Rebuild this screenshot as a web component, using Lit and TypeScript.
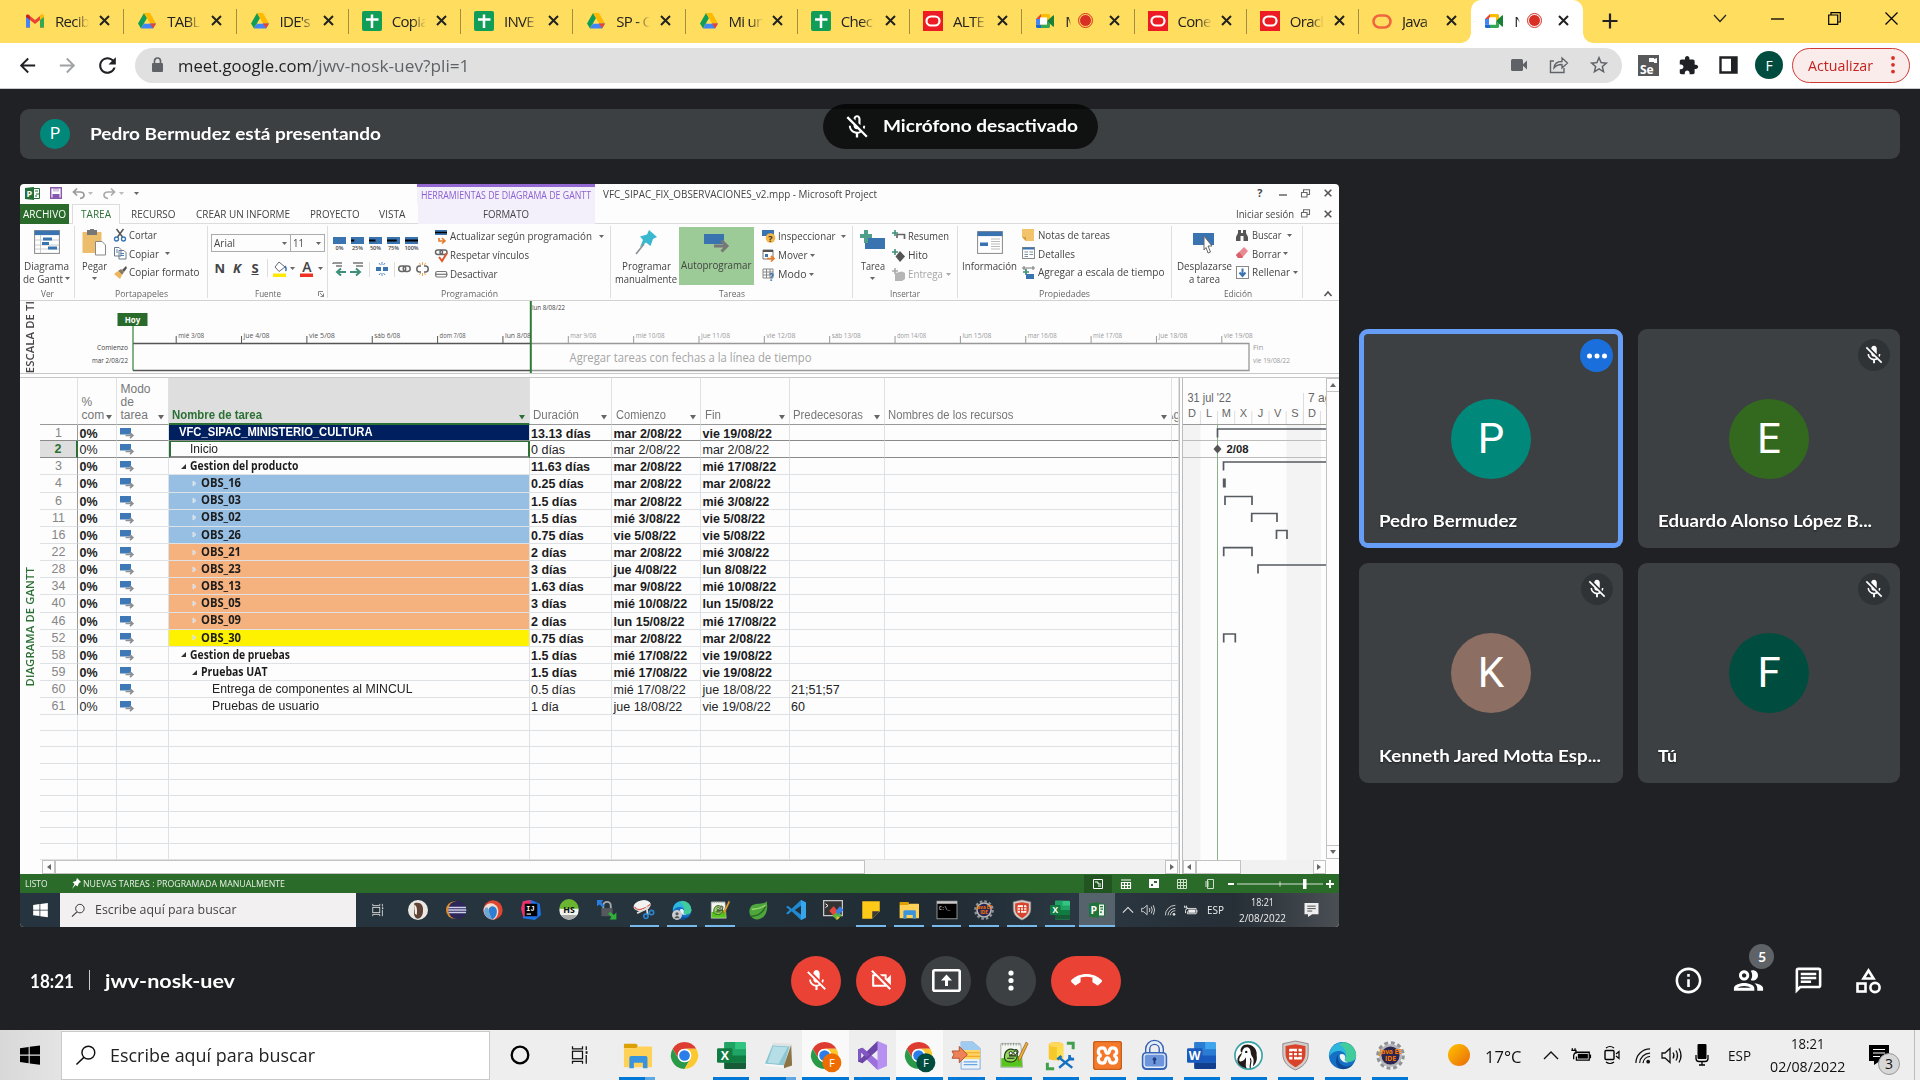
import { LitElement, html, css, svg, nothing } from "lit";
import { customElement, property } from "lit/decorators.js";

/* ---------- shared helpers ---------- */

/** Single-line text squeezed or stretched to a given width. */
@customElement("fit-text")
class FitText extends LitElement {
  @property({ type: Number }) w = 0;
  static styles = css`
    :host { display: inline-block; white-space: nowrap; flex: none; text-align: left; }
    .inner { display: inline-block; transform-origin: 0 50%; white-space: pre; }
  `;
  updated() {
    const el = this.renderRoot.querySelector(".inner") as HTMLElement;
    this.style.width = this.w + "px";
    el.style.transform = "none";
    const natural = el.getBoundingClientRect().width;
    if (natural > 0) el.style.transform = `scaleX(${this.w / natural})`;
  }
  render() { return html`<span class="inner"><slot @slotchange=${() => this.requestUpdate()}></slot></span>`; }
}

const fit = (text: string, w: number, cls = "") => html`<fit-text class=${cls} .w=${w}>${text}</fit-text>`;
const icon = (w: number, h: number, vb: string, body: unknown) =>
  html`<svg width=${w} height=${h} viewBox=${vb} fill="none" style="display:block;flex:none;overflow:visible">${body}</svg>`;
const mat = (size: number, d: string, fill = "#fff") =>
  icon(size, size, "0 0 24 24", svg`<path fill=${fill} d=${d}/>`);

const P = {
  micOff: "M19 11h-1.7c0 .74-.16 1.43-.43 2.05l1.23 1.23c.56-.98.9-2.09.9-3.28zm-4.02.17c0-.06.02-.11.02-.17V5c0-1.66-1.34-3-3-3S9 3.34 9 5v.18l5.98 5.99zM4.27 3L3 4.27l6.01 6.01V11c0 1.66 1.33 3 2.99 3 .22 0 .44-.03.65-.08l1.66 1.66c-.71.33-1.5.52-2.31.52-2.76 0-5.3-2.1-5.3-5.1H5c0 3.41 2.72 6.23 6 6.72V21h2v-3.28c.91-.13 1.77-.45 2.54-.9L19.73 21 21 19.73 4.27 3z",
  micOffLine: "M10.8 4.9c0-.66.54-1.2 1.2-1.2s1.2.54 1.2 1.2l-.01 3.91L15 10.6V5c0-1.66-1.34-3-3-3-1.54 0-2.79 1.16-2.96 2.65l1.76 1.76V4.9zM19 11h-1.7c0 .58-.1 1.13-.27 1.64l1.27 1.27c.44-.88.7-1.87.7-2.91zM4.41 2.86L3 4.27l6 6V11c0 1.66 1.34 3 3 3 .23 0 .44-.03.65-.08l1.66 1.66c-.71.33-1.5.52-2.31.52-2.76 0-5.3-2.1-5.3-5.1H5c0 3.41 2.72 6.23 6 6.72V21h2v-3.28c.91-.13 1.77-.45 2.55-.9l4.2 4.2 1.41-1.41L4.41 2.86z",
  camOff: "M9.56 8l-2-2-4.15-4.14L2 3.27 4.73 6H4c-.55 0-1 .45-1 1v10c0 .55.45 1 1 1h12c.21 0 .39-.08.55-.18L19.73 21l1.41-1.41-8.86-8.86L9.56 8zM5 16V8h1.73l8 8H5zm10-8v2.61l6 6V6.5l-4 4V7c0-.55-.45-1-1-1h-5.61l2 2H15z",
  callEnd: "M12 9c-1.6 0-3.15.25-4.6.72v3.1c0 .39-.23.74-.56.9-.98.49-1.87 1.12-2.66 1.85-.18.18-.43.28-.7.28-.28 0-.53-.11-.71-.29L.29 13.08c-.18-.17-.29-.42-.29-.7 0-.28.11-.53.29-.71C3.34 8.78 7.46 7 12 7s8.66 1.78 11.71 4.67c.18.18.29.43.29.71 0 .28-.11.53-.29.71l-2.48 2.48c-.18.18-.43.29-.71.29-.27 0-.52-.11-.7-.28-.79-.74-1.69-1.36-2.67-1.85-.33-.16-.56-.5-.56-.9v-3.1C15.15 9.25 13.6 9 12 9z",
  people: "M9 13.75c-2.34 0-7 1.17-7 3.5V19h14v-1.75c0-2.33-4.66-3.5-7-3.5zM4.34 17c.84-.58 2.87-1.25 4.66-1.25s3.82.67 4.66 1.25H4.34zM9 12c1.93 0 3.5-1.57 3.5-3.5S10.93 5 9 5 5.5 6.57 5.5 8.5 7.07 12 9 12zm0-5c.83 0 1.5.67 1.5 1.5S9.83 10 9 10s-1.5-.67-1.5-1.5S8.17 7 9 7zm7.04 6.81c1.16.84 1.96 1.96 1.96 3.44V19h4v-1.75c0-2.02-3.5-3.17-5.96-3.44zM15 12c1.93 0 3.5-1.57 3.5-3.5S16.93 5 15 5c-.54 0-1.04.13-1.5.35.63.89 1 1.98 1 3.15s-.37 2.26-1 3.15c.46.22.96.35 1.5.35z",
  chat: "M4 4h16v12H5.17L4 17.17V4m0-2c-1.1 0-1.99.9-1.99 2L2 22l4-4h14c1.1 0 2-.9 2-2V4c0-1.1-.9-2-2-2H4zm2 10h8v2H6v-2zm0-3h12v2H6V9zm0-3h12v2H6V6z",
  info: "M11 7h2v2h-2zm0 4h2v6h-2zm1-9C6.48 2 2 6.48 2 12s4.48 10 10 10 10-4.48 10-10S17.52 2 12 2zm0 18c-4.41 0-8-3.59-8-8s3.59-8 8-8 8 3.59 8 8-3.59 8-8 8z",
  puzzle: "M20.5 11H19V7c0-1.1-.9-2-2-2h-4V3.5C13 2.12 11.88 1 10.5 1S8 2.12 8 3.5V5H4c-1.1 0-1.99.9-1.99 2v3.8H3.5c1.49 0 2.7 1.21 2.7 2.7s-1.21 2.7-2.7 2.7H2V20c0 1.1.9 2 2 2h3.8v-1.5c0-1.49 1.21-2.7 2.7-2.7 1.49 0 2.7 1.21 2.7 2.7V22H17c1.1 0 2-.9 2-2v-4h1.5c1.38 0 2.5-1.12 2.5-2.5S21.88 11 20.5 11z",
  star: "M22 9.24l-7.19-.62L12 2 9.19 8.63 2 9.24l5.46 4.73L5.82 21 12 17.27 18.18 21l-1.63-7.03L22 9.24zM12 15.4l-3.76 2.27 1-4.28-3.32-2.88 4.38-.38L12 6.1l1.71 4.04 4.38.38-3.32 2.88 1 4.28L12 15.4z",
  back: "M20 11H7.83l5.59-5.59L12 4l-8 8 8 8 1.41-1.41L7.83 13H20v-2z",
  fwd: "M4 11h12.17l-5.59-5.59L12 4l8 8-8 8-1.41-1.41L16.17 13H4v-2z",
  reload: "M17.65 6.35C16.2 4.9 14.21 4 12 4c-4.42 0-7.99 3.58-7.99 8s3.57 8 7.99 8c3.73 0 6.84-2.55 7.73-6h-2.08c-.82 2.33-3.04 4-5.65 4-3.31 0-6-2.69-6-6s2.69-6 6-6c1.66 0 3.14.69 4.22 1.78L13 11h7V4l-2.35 2.35z",
};

/* ---------- coloured application icons ---------- */

const chrome = svg`<circle cx="16" cy="16" r="15" fill="#fff"/>
  <path d="M3 8.500A15 15 0 0 1 29 8.500H16A7.500 7.500 0 0 0 9.500 19.700Z" fill="#dd3c31"/>
  <path d="M3 8.500A15 15 0 0 0 16 31L22.500 19.700A7.500 7.500 0 0 1 9.500 19.700Z" fill="#2a9a48"/>
  <path d="M29 8.500A15 15 0 0 1 16 31L22.500 19.700A7.500 7.500 0 0 0 16 8.500Z" fill="#fbc92f"/>
  <circle cx="16" cy="16" r="7.300" fill="#fff"/><circle cx="16" cy="16" r="5.900" fill="#2b7de9"/>`;
const chromeWith = (c: string) => svg`<g transform="translate(-1 0)">${chrome}<circle cx="24" cy="24" r="10.500" fill=${c}/>
  <text x="24" y="28.500" font-size="12.500" fill="#fff" text-anchor="middle" font-family="Open Sans, sans-serif">F</text></g>`;
const office = (letter: string, c1: string, c2: string, c3: string, c4: string) => svg`
  <rect x="8" y="1" width="24" height="30" rx="1.500" fill=${c1}/><path d="M9.500 1H20V9H8V2.500Q8 1 9.500 1Z" fill=${c2}/><rect x="8" y="9" width="24" height="7.500" fill=${c2}/>
  <rect x="8" y="16" width="24" height="8" fill=${c3}/><path d="M8 24H32V29.500A1.500 1.500 0 0 1 30.500 31H9.500A1.500 1.500 0 0 1 8 29.500Z" fill=${c4}/>
  <rect x="0" y="8" width="17" height="16" rx="1.500" fill=${c3}/>
  <text x="8.500" y="21" font-size="13.500" font-weight="700" fill="#fff" text-anchor="middle" font-family="Open Sans, sans-serif">${letter}</text>`;
const excel = svg`${office("X", "#33c481", "#21a366", "#107c41", "#185c37")}`;
const word = svg`${office("W", "#41a5ee", "#2b7cd3", "#185abd", "#123f8d")}`;
const folder = svg`<path d="M1 4Q1 3 2 3H14Q16 3 16 5V8H1Z" fill="#dca005"/><path d="M1 8H14L17 6H31Q32 6 32 7V29H1Z" fill="#ffd257"/>
  <path d="M7 30V18.500A2 2 0 0 1 9 16.500H25A2 2 0 0 1 27 18.500V30H22V24H12V30Z" fill="#3a94dd"/>`;
const edge = svg`<circle cx="16" cy="16" r="15" fill="#1470c4"/>
  <path d="M1.500 13A15 15 0 0 1 31 16C31 21 27 23 23 23C19.500 23 17.500 21.500 19 19.500C20.500 17 19 11 12.500 11C7 11 2.500 14 1.500 18Z" fill="#2db7dc"/>
  <path d="M17 1A15 15 0 0 1 31 16C31 21 27 23 23 23C19.500 23 17.500 21.500 19 19.500C21 16 21 8 13 4Z" fill="#4bd386" opacity=".75"/>
  <path d="M12 14C9 19 12 27 20 28C24 28.500 27 26 29 24A15 15 0 0 1 15 31C8 29 7 19 12 14Z" fill="#0d4b98"/>
  <path d="M13 15C17 13 20 16 18.800 19.500C17.500 21.500 19.500 23.300 23 23.200C19 25 12 22 13 15Z" fill="#eef6fb"/>`;
const notepad = svg`<path d="M10 3L29 4L22 27L1 25Z" fill="#8cc7d3"/><path d="M10 2L30 3L29 6L9 5Z" fill="#dfe3e4"/>
  <path d="M30 4L31 27L22 30L22 27Z" fill="#8c7444"/><path d="M1 25L22 27L22 29.500L1 27Z" fill="#f6f8f8"/><path d="M10 6L26 7L16 25L4 24Z" fill="#c3e6ec" opacity=".75"/>`;
const notepadpp = svg`<path d="M2 3H24L26 29H2Z" fill="#f3f6f0" stroke="#a5aaa5"/><path d="M2.500 19L25 16L25.500 28.500H2.500Z" fill="#58c41e"/>
  <path d="M6 18C6 11 11 7 17 10C20 8 22 12 20 14C21 20 17 24 12 23C8 23 6 21 6 18Z" fill="#93d95a" stroke="#263b1f" stroke-width="1.300"/>
  <circle cx="13" cy="13.500" r="1.800" fill="#fff" stroke="#222"/><circle cx="18" cy="13" r="1.800" fill="#fff" stroke="#222"/><path d="M9 19H17M11 16.500H19" stroke="#222" stroke-width="1.300"/>
  <path d="M30 1L32 3L24 20L21.500 22L21.500 18.500Z" fill="#f0ac35" stroke="#80501b" stroke-width=".700"/><path d="M4 2V5M7 2V5M10 2V5M13 2V5M16 2V5M19 2V5M22 2V5" stroke="#8f9693"/>`;
const vstudio = svg`<path d="M0 9.500L5 7.500V24.500L0 22.500Z" fill="#5b3a93"/><path d="M5 7.500L24 23.500L21.500 32L0 11Z" fill="#9b70dc"/>
  <path d="M5 24.500L24 8L21.500 0L0 21Z" fill="#6c45a8"/><path d="M5 7.500L13 14.500L9 18L3.500 13V19L0 22.500V9.500Z" fill="#8257c4"/><path d="M3.500 13L6.500 16L3.500 19Z" fill="#eee"/>
  <path d="M21.500 0L32 4.500V27.500L21.500 32Z" fill="#b791f2"/>`;
const winscp = svg`<path d="M10 1H23L31 8V31H10Z" fill="#eaf2fb" stroke="#7fa6d4"/><path d="M10 1H23L31 8V10H10Z" fill="#9fcbf1"/><path d="M7 10H31V20H7Z" fill="#ffd463"/>
  <path d="M10 13H31M10 17H31" stroke="#f0a92a" stroke-width="1.200"/><path d="M13 23H28M13 26H28" stroke="#6aa5dd" stroke-width="1.400"/><path d="M0 11H8V6L17 15L8 24V19H0L2 15Z" fill="#ee8157" stroke="#a9512c"/>`;
const dbTool = svg`<path d="M3 4C3 0 19 0 19 4V19C19 22 3 22 3 19Z" fill="#f7c829"/><path d="M12 2C17 2 19 3 19 4V19C19 21 15 21.500 12 21.500Z" fill="#ffdf4d"/><ellipse cx="11" cy="4" rx="8" ry="2.500" fill="#ffd75e"/>
  <path d="M23 2.500H30V9" stroke="#41a04c" stroke-width="3.300"/><path d="M1.500 24V30.500H9" stroke="#41a04c" stroke-width="3.300"/>
  <path d="M14 18L29 29.500M28 18L14.500 29.500" stroke="#1471c0" stroke-width="2.600"/><path d="M12.500 20.500L17 16.500M26 15.500V20H31" stroke="#1471c0" stroke-width="3"/>`;
const xampp = svg`<rect x="0" y="0" width="32" height="32" rx="3" fill="#f4792b"/><rect x=".700" y=".700" width="30.600" height="30.600" rx="2.500" stroke="#c55f1c" stroke-width="1.400"/>
  <path d="M10.500 7.500C15.500 7.500 12.500 13.500 16 13.500C19.500 13.500 16.500 7.500 21.500 7.500C27.500 7.500 27.500 15.500 22.500 16C27.500 16.500 27.500 24.500 21.500 24.500C16.500 24.500 19.500 18.500 16 18.500C12.500 18.500 15.500 24.500 10.500 24.500C4.500 24.500 4.500 16.500 9.500 16C4.500 15.500 4.500 7.500 10.500 7.500Z" fill="none" stroke="#fff" stroke-width="3.600"/>`;
const lockApp = svg`<path d="M8.500 14V9A7.500 7.500 0 0 1 23.500 9V14" stroke="#3560b0" stroke-width="6"/><path d="M8.500 14V9A7.500 7.500 0 0 1 23.500 9V14" stroke="#e6eefa" stroke-width="3"/>
  <rect x="2" y="12" width="28" height="20" rx="5" fill="#3765b8"/><rect x="4.500" y="14.500" width="23" height="14.500" rx="3" fill="#6c95dc" stroke="#e3ecf9" stroke-width="1.500"/>
  <circle cx="16" cy="20" r="2" fill="#20407f"/><path d="M16 20V25.500" stroke="#20407f" stroke-width="2"/>`;
const dbeaver = svg`<circle cx="16" cy="16" r="15" fill="#fff" stroke="#37a3a4" stroke-width="1.800"/><path d="M11 4.500C18 2 26 7 25 16C26 21 24 25 21 28C21 24 23 21 20 17C17 13 20 9 15 7C11 6 9 10 9 13C6 12 7 7 11 4.500Z" fill="#241c1a"/>
  <path d="M9 13C8 17 5 19 6 22C8 24 12 21 13 18C14 23 12 27 14 30C10 30 5 27 4 23C3 18 6 15 9 13Z" fill="#241c1a"/><circle cx="13.500" cy="12" r="1.300" fill="#111"/><path d="M18 19C20 23 17 26 18 30" stroke="#241c1a" stroke-width="1.300"/>`;
const forti = svg`<path d="M2 3L16 0L30 3V14C30 24 23 29 16 32C9 29 2 24 2 14Z" fill="#d2cdca" stroke="#8b8683"/><path d="M5 5.500L16 3.500L27 5.500V14C27 22 21 26 16 29C11 26 5 22 5 14Z" fill="#d8432a"/>
  <rect x="9" y="8.500" width="14" height="12" rx="1" fill="#fff"/><path d="M9 12.500H23M9 16.500H23M13.500 11V21M18.500 8V18" stroke="#d83b22" stroke-width="1.700"/>`;
const javaEE = svg`<circle cx="16" cy="16" r="14" stroke="#8f9296" stroke-width="3.500" stroke-dasharray="4.200 3.130"/><circle cx="16" cy="16" r="12.500" fill="#b4b6b8"/><circle cx="16" cy="16" r="10" fill="#2c2452"/>
  <text x="16" y="14.500" font-size="7.500" font-weight="700" fill="#f57c00" text-anchor="middle" font-family="Open Sans, sans-serif" textLength="25">Java EE</text>
  <text x="16" y="22.500" font-size="7.500" font-weight="700" fill="#f57c00" text-anchor="middle" font-family="Open Sans, sans-serif">IDE</text>`;
const taskView = (c: string) => svg`<path d="M4 2V6H20V2M4 30V26H20V30" stroke=${c} stroke-width="2"/><rect x="4" y="10" width="16" height="12" stroke=${c} stroke-width="2"/><path d="M26 2V8M26 16V30" stroke=${c} stroke-width="2"/><rect x="25" y="10" width="3" height="4" fill=${c}/>`;
const winLogo = (c: string) => svg`<path fill=${c} d="M0 3L9.500 1.600V10H0ZM10.700 1.400L22 0V10H10.700ZM0 11.200H9.500V19.600L0 18.200ZM10.700 11.200H22V21.200L10.700 19.800Z"/>`;
const searchGlyph = (c: string) => svg`<circle cx="14" cy="8" r="6.700" stroke=${c} stroke-width="1.500"/><path d="M9.300 13L1.500 20.500" stroke=${c} stroke-width="1.600"/>`;
const chevUp = (c: string) => svg`<path d="M1 9L8 2L15 9" stroke=${c} stroke-width="1.400"/>`;
const wifi = (c: string) => svg`<g stroke=${c} stroke-width="1.300"><path d="M2 17A15 15 0 0 1 17 2"/><path d="M6 17A11 11 0 0 1 17 6.500"/><path d="M9.500 17A8 8 0 0 1 17 10"/></g><circle cx="15" cy="15.500" r="2" fill=${c}/>`;
const speaker = (c: string) => svg`<path d="M1 7H4L9 2.500V16.500L4 12H1Z" stroke=${c} stroke-width="1.300"/><path d="M12 6.500Q14 9.500 12 12.500M15 4.500Q18 9.500 15 14.500M18 2.500Q22 9.500 18 16.500" stroke=${c} stroke-width="1.300"/>`;
const battery = (c: string) => svg`<path d="M6 5.500H21V14H7V10" stroke=${c} stroke-width="1.400"/><rect x="8.500" y="7.200" width="11" height="5.200" fill=${c}/><rect x="21.500" y="8" width="1.500" height="4" fill=${c}/><path d="M1.500 3.500H6.500V6.500H5L4 9V13M2.500 3.500V1M5.500 3.500V1" stroke=${c} stroke-width="1.400"/>`;
const note = (c: string, l: string) => svg`<path d="M0 0H20V16H11L5 20V16H0Z" fill=${c}/><path d="M4 4.500H16M4 8H16M4 11.500H11" stroke=${l} stroke-width="1.200"/>`;

/* ---------- browser chrome ---------- */

const FAV: Record<string, unknown> = {
  gmail: svg`<path d="M1 5V16.500H5V9L10 13L15 9V16.500H19V5L17 3.500L10 9L3 3.500Z" fill="#ea4335"/><path d="M1 5V16.500H5V8Z" fill="#4285f4"/><path d="M19 5V16.500H15V8Z" fill="#34a853"/><path d="M1 5Q1.500 3 3.500 3.800L5 5V9L1 6Z" fill="#c5221f"/><path d="M19 5Q18.500 3 16.500 3.800L15 5V9L19 6Z" fill="#fbbc04"/>`,
  drive: svg`<path d="M7 2L1 12.500L4 17.500L10 7Z" fill="#0f9d58"/><path d="M7 2H13L19 12.500H13Z" fill="#ffba00"/><path d="M7 12.500H19L16 17.500H4Z" fill="#4285f4"/><path d="M13 12.500H19L16 17.500Z" fill="#ea4335"/><path d="M10 8L7.300 12.500H12.700Z" fill="#ffdd5e"/>`,
  sheet: svg`<rect width="20" height="20" rx="2" fill="#0f9d58"/><path d="M10 3.500V17M4 8.500H16.500" stroke="#fff" stroke-width="2.500"/>`,
  oracle: svg`<rect width="20" height="20" fill="#ed1c24"/><rect x="3.500" y="5.500" width="13" height="9" rx="4.500" stroke="#fff" stroke-width="2.200"/>`,
  java: svg`<rect x="1.500" y="4.500" width="17" height="12" rx="6" stroke="#f0653f" stroke-width="2.500"/>`,
  meet: svg`<path d="M1 8L6 3V8Z" fill="#ea4335"/><path d="M6 3H13.500Q15 3 15 4.500V8L12 10V6.500H6Z" fill="#fbbc04"/><path d="M1 8H5V13.500H1Z" fill="#4285f4"/><path d="M1 13.500H6V17H2.500Q1 17 1 15.500Z" fill="#1967d2"/><path d="M6 13.500H12V10L15 12.500V15.500Q15 17 13.500 17H6Z" fill="#34a853"/><path d="M5 6.500H12V13.500H5Z" fill="#fff"/><path d="M12 10L18 4.500Q19 4 19 5V15Q19 16 18 15.500Z" fill="#188038"/>`,
};
const TABS: [string, string, boolean?][] = [
  ["gmail", "Recib"], ["drive", "TABL"], ["drive", "IDE's"], ["sheet", "Copia"], ["sheet", "INVE"], ["drive", "SP - C"], ["drive", "Mi un"],
  ["sheet", "Chec"], ["oracle", "ALTE"], ["meet", "M", true], ["oracle", "Cone"], ["oracle", "Oracl"], ["java", "Java"], ["meet", "N", true],
];

@customElement("browser-chrome")
class BrowserChrome extends LitElement {
  static styles = css`
    :host { display: block; height: 89px; font-family: "Open Sans", "Noto Sans", sans-serif; color: #222; box-sizing: border-box; border-bottom: 1px solid #c9cacb; background: #fff; }
    .strip { height: 43px; background: #ffdd5e; display: flex; padding-left: 11.500px; }
    .tab { width: 112.250px; height: 43px; box-sizing: border-box; display: flex; align-items: center; padding: 0 0 2px 13.500px; position: relative; flex: none; }
    .tab:not(.on):not(.last)::after { content: ""; position: absolute; right: -0.500px; top: 9px; width: 1px; height: 25px; background: #a28d45; }
    .on { background: #fff; border-radius: 10px 10px 0 0; }
    .on::before, .on::after { content: ""; position: absolute; bottom: 0; width: 10px; height: 10px; }
    .on::before { left: -10px; background: radial-gradient(circle at 0 0, transparent 9.500px, #fff 10px); }
    .on::after { right: -10px; background: radial-gradient(circle at 100% 0, transparent 9.500px, #fff 10px); }
    .tt { margin-left: 10px; width: 34px; overflow: hidden; font-size: 15px; line-height: 20px; white-space: nowrap; letter-spacing: -0.700px; -webkit-mask-image: linear-gradient(90deg, #000 60%, transparent 100%); }
    .tt.short { width: 6px; }
    .rec { width: 11px; height: 11px; border-radius: 50%; background: #d93025; border: 1.500px solid #ffdd5e; outline: 1.300px solid #d93025; margin: 0 6px 0 8px; }
    .on .rec { border-color: #fff; }
    .x { margin-left: auto; margin-right: 14px; }
    .plus { margin: 13px 0 0 19px; }
    .win { margin-left: auto; display: flex; height: 37px; align-items: center; }
    .win div { width: 57.200px; display: flex; justify-content: center; }
    .bar { height: 45px; display: flex; align-items: center; padding-bottom: 1px; box-sizing: border-box; }
    .nav { width: 40px; display: flex; justify-content: center; }
    .omni { width: 1487px; height: 35px; border-radius: 18px; background: #e0e0e0; display: flex; align-items: center; font-size: 16.500px; box-sizing: border-box; padding: 0 3px 0 16px; }
    .omni .path { color: #5f6368; }
    .lock { margin-right: 13.500px; }
    .omni .end { margin-left: auto; display: flex; align-items: center; }
    .omni .end div { width: 40px; display: flex; justify-content: center; }
    .ext { width: 40.300px; display: flex; justify-content: center; }
    .av { width: 28px; height: 28px; border-radius: 50%; background: #004d40; color: #fff; font-size: 14px; display: flex; align-items: center; justify-content: center; }
    .upd { width: 118.500px; height: 35px; border-radius: 18px; border: 1.500px solid #cf3a32; background: #faeceb; color: #c5221f; box-sizing: border-box; display: flex; align-items: center; padding: 0 14px 0 15px; font-size: 14px; margin-left: 2.500px; justify-content: space-between; }
  `;
  render() {
    return html`
      <div class="strip">
        ${TABS.map(([f, t, rec], i) => html`<div class="tab ${i === 13 ? "on" : i === 12 ? "last" : ""}">
          ${icon(20, 20, "0 0 20 20", FAV[f])}<div class="tt ${rec ? "short" : ""}">${t}</div>${rec ? html`<div class="rec"></div>` : nothing}
          <div class="x">${icon(11, 11, "0 0 11 11", svg`<path d="M1 1L10 10M10 1L1 10" stroke="#222" stroke-width="2"/>`)}</div></div>`)}
        <div class="plus">${icon(16, 16, "0 0 16 16", svg`<path d="M8 0.500V15.500M0.500 8H15.500" stroke="#222" stroke-width="2.200"/>`)}</div>
        <div class="win">
          <div>${icon(14, 9, "0 0 14 9", svg`<path d="M1 1L7 7.500L13 1" stroke="#222" stroke-width="1.200"/>`)}</div>
          <div>${icon(13, 2, "0 0 13 2", svg`<path d="M0 1H13" stroke="#000" stroke-width="1.300"/>`)}</div>
          <div>${icon(13, 13, "0 0 13 13", svg`<path d="M0.700 3H9.700V12.300H0.700ZM3 3V0.700H12.300V10H9.700" stroke="#000" stroke-width="1.200"/>`)}</div>
          <div>${icon(13, 13, "0 0 13 13", svg`<path d="M0.500 0.500L12.500 12.500M12.500 0.500L0.500 12.500" stroke="#000" stroke-width="1.200"/>`)}</div>
        </div>
      </div>
      <div class="bar">
        <div class="nav" style="margin-left:7px">${mat(23, P.back, "#202124")}</div><div class="nav">${mat(23, P.fwd, "#a0a2a5")}</div><div class="nav">${mat(25, P.reload, "#202124")}</div>
        <div class="omni" style="margin-left:8px">
          <div class="lock">${icon(13, 16, "0 0 13 16", svg`<rect x="1" y="6" width="11" height="9" rx="1" fill="#5f6368"/><path d="M3.500 6V4A3 3 0 0 1 9.500 4V6" stroke="#5f6368" stroke-width="1.700"/>`)}</div>
          ${fit("meet.google.com", 134)}<span class="path">${fit("/jwv-nosk-uev?pli=1", 157.5)}</span>
          <div class="end"><div>${icon(16, 12, "0 0 16 12", svg`<rect width="12" height="12" rx="1.500" fill="#5f6368"/><path d="M11 6L16 1.500V10.500Z" fill="#5f6368"/>`)}</div>
            <div>${icon(20, 18, "0 0 20 18", svg`<path d="M5 5H1.500V16.500H15V12" stroke="#5f6368" stroke-width="1.400"/><path d="M5 12Q5.500 5.500 13 5.500V2L18.500 7L13 12V8.500Q8 8.300 5 12Z" stroke="#5f6368" stroke-width="1.300"/>`)}</div>
            <div>${mat(22, P.star, "#5f6368")}</div></div>
        </div>
        <div class="ext" style="margin-left:6px">${icon(21, 21, "0 0 21 21", svg`<rect width="21" height="21" fill="#58595b"/><path d="M11 3H16V4L19 3V8H16V7H11Z" fill="#fff"/><text x="2" y="18.500" font-size="12" font-weight="700" fill="#fff" font-family="Open Sans, sans-serif">Se</text>`)}</div>
        <div class="ext">${mat(21, P.puzzle, "#202124")}</div>
        <div class="ext">${icon(19, 18, "0 0 19 18", svg`<path d="M1.500 1.500H17.500V16.500H1.500Z" stroke="#202124" stroke-width="2.400"/><path d="M12 1H18V17H12Z" fill="#202124"/>`)}</div>
        <div class="ext"><div class="av">F</div></div>
        <div class="upd">${fit("Actualizar", 65)}${icon(4, 18, "0 0 4 18", svg`<circle cx="2" cy="2" r="1.900" fill="#d93025"/><circle cx="2" cy="8.800" r="1.900" fill="#d93025"/><circle cx="2" cy="15.600" r="1.900" fill="#d93025"/>`)}</div>
      </div>`;
  }
}

/* ---------- shared Project window ---------- */

const BLUE = "#3a74b0";
const bar = (x = 0, y = 0, w = 12, h = 7) => svg`<rect x=${x} y=${y} width=${w} height=${h} fill=${BLUE}/>`;
const caretSvg = (c = "#666") => icon(5, 3, "0 0 5 3", svg`<path d="M0 0H5L2.500 3Z" fill=${c}/>`);
const I: Record<string, unknown> = {
  cut: svg`<path d="M2.500 0L8.500 8M9.500 0L3.500 8" stroke="#555" stroke-width="1.500"/><circle cx="2.500" cy="10" r="2" stroke="#3a74b0" stroke-width="1.300"/><circle cx="9.500" cy="10" r="2" stroke="#3a74b0" stroke-width="1.300"/>`,
  copy: svg`<path d="M0.500 0.500H5L7 2.500V9H0.500ZM5 3.500H10L12 5.500V12H5Z" fill="#fff" stroke="#6b7a8a"/><path d="M6.500 6.500H10M6.500 8.500H10M2 3H4M2 5H4" stroke="#4a82bd"/>`,
  brush: svg`<path d="M12 0L8 4L10 6L13 2Z" fill="#555"/><path d="M7 3L10 6L8 9L4 5Z" fill="#8b7a63"/><path d="M4 5L8 9L6 13L0 8Z" fill="#f0b45b"/>`,
  upd: svg`${bar(0, 0, 12, 5)}<path d="M0 2.500H12" stroke="#000" stroke-width="1.500"/><path d="M4 8V11H9M7 8L10 11L7 13.500" stroke="#e77b27" stroke-width="1.600"/>`,
  resp: svg`<rect x="0.500" y="1" width="7" height="4.500" rx="2.200" stroke="#666" stroke-width="1.500"/><rect x="5" y="1" width="7" height="4.500" rx="2.200" stroke="#666" stroke-width="1.500"/><path d="M4 8L7 12L12 4" stroke="#e0562a" stroke-width="2"/>`,
  deact: svg`<rect x="0.700" y="3.500" width="11" height="5.500" rx="1.500" stroke="#777" stroke-width="1.200"/><path d="M0 6.300H12.500" stroke="#777" stroke-width="1.200"/>`,
  insp: svg`${bar(0, 0, 12, 6)}<circle cx="8.500" cy="8" r="4.800" fill="#f5b648"/><text x="8.500" y="11.500" font-size="9" font-weight="700" text-anchor="middle" fill="#333" font-family="Open Sans, sans-serif">?</text>`,
  mover: svg`<path d="M1 1H11V10H1Z" stroke="#777" fill="#fff"/><path d="M1 2H11" stroke="#555" stroke-width="2"/><path d="M3 5H6V8H3Z" fill="${BLUE}"/><path d="M5 9.500H11M9 7L12 9.500L9 12.500" stroke="#e77b27" stroke-width="1.700"/>`,
  modo: svg`<path d="M1 1H11V10H1ZM1 4H11M1 7H11M4.500 1V10M8 1V10" stroke="#888"/><text x="9.500" y="13" font-size="10" font-weight="700" text-anchor="middle" fill="${BLUE}" font-family="Open Sans, sans-serif">?</text>`,
  resumen: svg`<path d="M3 0V6M0 3H6" stroke="#3f8f79" stroke-width="1.600"/><path d="M5 4V8M5 4.500H12.500V9" stroke="#666" stroke-width="1.700"/>`,
  hito: svg`<path d="M3 0V6M0 3H6" stroke="#3f8f79" stroke-width="1.600"/><path d="M8 2L13 7.500L8 13L3.500 7.500Z" fill="#555"/>`,
  entrega: svg`<path d="M3 0V6M0 3H6" stroke="#aaa" stroke-width="1.600"/><path d="M3 5L10 3.500L13 5V11L10 13H3Z" fill="#b5b5b5"/>`,
  notas: svg`<path d="M0 0H12V12H4L0 8Z" fill="#f2c36b"/><path d="M0 8H4V12Z" fill="#d79d3a"/>`,
  detalles: svg`<rect x="0.500" y="0.500" width="12" height="11" fill="#fff" stroke="#888"/><path d="M1 1.500H12" stroke="${BLUE}" stroke-width="2"/><path d="M2.500 5H6M7.500 5H11M2.500 7.500H6M7.500 7.500H11M2.500 9.500H6" stroke="#7b8ba0"/>`,
  agregar: svg`<path d="M2 0V4M11 0V4M0 2H13" stroke="#777"/><path d="M4 3V9M1 6H7" stroke="#3f8f79" stroke-width="1.700"/>${bar(4, 8, 8, 5)}`,
  buscar: svg`<path d="M2 1H5V4H7V1H10V4L12 8V12H7.500V7H4.500V12H0V8L2 4Z" fill="#555"/>`,
  borrar: svg`<path d="M8 0L12 4L6 11H2L0 8Z" fill="#e78a91"/><path d="M0 8L3 5L7 10L6 11H2Z" fill="#d9606b"/>`,
  rellenar: svg`<rect x="0.500" y="0.500" width="12" height="12" fill="#fff" stroke="#888"/><path d="M6.500 2.500V9M3.500 6.500L6.500 10L9.500 6.500" stroke="${BLUE}" stroke-width="2"/>`,
};
const small = (key: string, text: string, w: number, caret = -1, cls = "") => html`<div class="srow ${cls}"><span class="sic">${icon(14, 13, "0 0 14 13", I[key])}</span>${fit(text, w)}${caret >= 0 ? html`<span class="cr" style="margin-left:${caret}px">${caretSvg(cls ? "#aaa" : "#666")}</span>` : nothing}</div>`;

type Row = [string, string, number, string, string, string, string, string, string?, number?];
/* id, name, indent, name style, duration, start, end, predecessors, marker, name width */
const ROWS: Row[] = [
  ["1", "VFC_SIPAC_MINISTERIO_CULTURA", 11.5, "navy b", "13.13 días", "mar 2/08/22", "vie 19/08/22", "", "", 193.5],
  ["2", "Inicio", 22.5, "sel", "0 días", "mar 2/08/22", "mar 2/08/22", "", "", 28],
  ["3", "Gestion del producto", 22.5, "b", "11.63 días", "mar 2/08/22", "mié 17/08/22", "", "o", 108.5],
  ["4", "OBS_16", 33.5, "blue b", "0.25 días", "mar 2/08/22", "mar 2/08/22", "", "c", 40],
  ["6", "OBS_03", 33.5, "blue b", "1.5 días", "mar 2/08/22", "mié 3/08/22", "", "c", 40],
  ["11", "OBS_02", 33.5, "blue b", "1.5 días", "mié 3/08/22", "vie 5/08/22", "", "c", 40],
  ["16", "OBS_26", 33.5, "blue b", "0.75 días", "vie 5/08/22", "vie 5/08/22", "", "c", 40],
  ["22", "OBS_21", 33.5, "orange b", "2 días", "mar 2/08/22", "mié 3/08/22", "", "c", 40],
  ["28", "OBS_23", 33.5, "orange b", "3 días", "jue 4/08/22", "lun 8/08/22", "", "c", 40],
  ["34", "OBS_13", 33.5, "orange b", "1.63 días", "mar 9/08/22", "mié 10/08/22", "", "c", 40],
  ["40", "OBS_05", 33.5, "orange b", "3 días", "mié 10/08/22", "lun 15/08/22", "", "c", 40],
  ["46", "OBS_09", 33.5, "orange b", "2 días", "lun 15/08/22", "mié 17/08/22", "", "c", 40],
  ["52", "OBS_30", 33.5, "yellow b", "0.75 días", "mar 2/08/22", "mar 2/08/22", "", "c", 40],
  ["58", "Gestion de pruebas", 22.5, "b", "1.5 días", "mié 17/08/22", "vie 19/08/22", "", "o", 100],
  ["59", "Pruebas UAT", 33.5, "b", "1.5 días", "mié 17/08/22", "vie 19/08/22", "", "o", 66.5],
  ["60", "Entrega de componentes al MINCUL", 44.5, "", "0.5 días", "mié 17/08/22", "jue 18/08/22", "21;51;57", "", 200.5],
  ["61", "Pruebas de usuario", 44.5, "", "1 día", "jue 18/08/22", "vie 19/08/22", "60", "", 107],
];
const BLANKS = Array.from({ length: 9 });

@customElement("project-window")
class ProjectWindow extends LitElement {
  static styles = css`
    :host { display: block; width: 1319px; height: 743px; background: #fdfdfe; overflow: hidden; border-radius: 4px; font: 10.800px/14px "Open Sans", "Noto Sans", sans-serif; color: #444; }
    svg { display: block; flex: none; }
    .title { height: 20px; display: flex; align-items: center; }
    .qa { display: flex; align-items: center; width: 397px; padding: 0 0 2px 5px; box-sizing: border-box; }
    .ctx { width: 177.500px; height: 20px; box-sizing: border-box; border-top: 3px solid #9368d0; background: #f3effb; color: #8b5fd0; padding-left: 4px; line-height: 16px; font-size: 10px; }
    .name { padding-left: 8px; font-size: 11.500px; }
    .ctl { margin-left: auto; display: flex; padding-bottom: 2px; }
    .ctl > * { width: 22.600px; display: flex; justify-content: center; align-items: center; font-weight: 700; }
    .tabs { height: 20px; display: flex; align-items: center; border-bottom: 1px solid #dcdcdc; box-sizing: border-box; font-size: 11px; }
    .tabs .ctl { padding: 0; }
    .tabs > .t { height: 20px; display: flex; align-items: center; justify-content: center; box-sizing: border-box; }
    .file { width: 49px; background: #2a6b2b; color: #fff; }
    .task { width: 48px; margin-left: 3px; color: #2b7034; border: 1px solid #dcdcdc; border-bottom: 0; background: #fdfdfe; height: 20px; }
    .fmt { width: 177.500px; background: #f3effb; }
    .ribbon { height: 77px; display: flex; border-bottom: 1px solid #d2d2d2; box-sizing: border-box; }
    .grp { display: flex; flex-direction: column; position: relative; box-sizing: border-box; flex: none; }
    .grp::after { content: ""; position: absolute; right: 0; top: 2px; height: 72px; width: 1px; background: #dedede; }
    .body { display: flex; height: 62px; }
    .lab { height: 15px; display: flex; justify-content: center; align-items: center; font-size: 9.500px; color: #666; position: relative; padding-top: 2px; box-sizing: border-box; }
    .corner { position: absolute; right: 4px; top: 6px; }
    .big { display: flex; flex-direction: column; align-items: center; padding-top: 1.500px; line-height: 13.500px; font-size: 11px; }
    .big .bi { height: 33px; display: flex; align-items: center; }
    .big .ln { height: 13.500px; display: flex; align-items: center; gap: 2px; }
    .auto { background: #9dcb97; margin: 3px 0 0 -2.500px; height: 58px; padding-top: 0; box-sizing: border-box; }
    .auto .bi { height: 31px; }
    .col { padding-top: 2.500px; display: flex; flex-direction: column; }
    .srow { height: 19px; display: flex; align-items: center; }
    .tight { padding-top: 2px; }
    .tight .srow { height: 18.500px; }
    .srow.dis { color: #a5a5a5; }
    .sic { width: 15.500px; display: flex; }
    .fbox { display: flex; margin: 0 0 0 3.500px; height: 18px; }
    .fbox div { border: 1px solid #ababab; box-sizing: border-box; display: flex; align-items: center; justify-content: space-between; padding: 0 3px 0 2px; }
    .fb1 { width: 80px; } .fb2 { width: 34px; border-left: 0 !important; }
    .brow { display: flex; align-items: center; height: 22px; margin: 5px 0 0 7px; font-weight: 700; font-size: 13px; }
    .timeline { height: 73px; display: flex; border-bottom: 1px solid #c8c8c8; box-sizing: border-box; }
    .gap { height: 4px; border-bottom: 1px solid #c8c8c8; box-sizing: border-box; }
    .vt { width: 20px; display: flex; align-items: center; justify-content: center; flex: none; overflow: hidden; }
    .vt span { writing-mode: vertical-rl; transform: rotate(180deg); white-space: nowrap; letter-spacing: .1px; }
    .main { height: 496px; display: flex; }
    .main .vt { align-items: flex-end; padding-bottom: 188px; box-sizing: border-box; color: #2b7034; font-weight: 600; font-size: 11.300px; line-height: 20px; }
    .pane { width: 1140px; display: flex; flex-direction: column; border-right: 1px solid #bbb; box-sizing: border-box; font-family: "Liberation Sans", Arial, sans-serif; }
    .r { display: grid; grid-template-columns: 38px 39px 51.500px 361px 82.500px 89px 88.500px 95px 287px 1fr; height: 17.160px; box-sizing: border-box; font-size: 12.500px; line-height: 18.500px; color: #222; flex: none; }
    .r > div { border-right: 1px solid #dfe2e4; border-bottom: 1px solid #dfe2e4; box-sizing: border-box; padding-left: 1.500px; overflow: hidden; white-space: nowrap; }
    .r > .id { text-align: center; color: #868686; padding: 0; border-right: 1px solid #999; line-height: 16.500px; }
    .r.bold { font-weight: 700; color: #1c1c1c; } .r.bold .id { font-weight: 400; }
    .r.h { height: 46.500px; color: #777; font-size: 12px; line-height: 13px; }
    .r.h > div { border-bottom: 1px solid #999; display: flex; align-items: flex-end; padding: 0 4px 2px 3.500px; justify-content: space-between; }
    .r.h > .id { border-right: 1px solid #dfe2e4; }
    .r.h > .hn { background: #dedede; color: #2b7034; font-weight: 700; border-bottom: 2px solid #2b7034; padding-bottom: 1px; }
    .r.h svg { margin-bottom: 2px; }
    .r.one { height: 16.700px; } .r.one > div { border-bottom-color: #8a8a8a; }
    .r.two { height: 17px; } .r.two > div { border-bottom-color: #8a8a8a; }
    .r.two > .id { background: #dedede; color: #2b7034; font-weight: 700; border-right: 2px solid #2b7034; }
    .r.n { height: 17px; }
    .r > .nm { display: flex; align-items: center; }
    .mk { width: 9px; display: flex; margin-left: -9px; }
    .bold:not(.one) > .nm { font-family: "Open Sans", "Noto Sans", sans-serif; font-size: 11.500px; }
    .navy { background: #001f5f; color: #fff; }
    .r > .sel { border: 2px solid #2b7034; border-top-width: 1px; }
    .blue { background: #97bfe3; } .orange { background: #f6b27e; } .yellow { background: #fff200; }
    .r > .md { padding: 3px 0 0 3px; }
    .hs { height: 14px; display: flex; margin-top: auto; background: #f1f1f2; flex: none; }
    .hs div { border: 1px solid #c2c2c2; box-sizing: border-box; background: #fdfdfe; display: flex; align-items: center; justify-content: center; }
    .arr { width: 13px; }
    .gantt { width: 144px; margin-left: 1.500px; border-left: 1px solid #bbb; box-sizing: border-box; display: flex; flex-direction: column; overflow: hidden; }
    .vs { width: 13px; display: flex; flex-direction: column; justify-content: space-between; border-left: 1px solid #c2c2c2; height: 481px; box-sizing: border-box; }
    .vs div { height: 14px; border: solid #c2c2c2; border-width: 1px 0; box-sizing: border-box; display: flex; align-items: center; justify-content: center; }
    .status { height: 19px; background: #2b6b29; color: #e8f0e8; display: flex; align-items: center; padding-left: 4.500px; font-size: 9px; }
    .status .vw { display: flex; margin-left: auto; height: 18px; }
    .status .vw div { width: 28px; display: flex; align-items: center; justify-content: center; }
    .status .vw .cur { background: #215420; }
    .slider { margin: 0 2px 0 2px; }
    .dock { height: 34px; display: flex; background: linear-gradient(90deg, #26343f 0, #25343d 50%, #202b33 70%, #2b3843 80%, #262e36 92%, #4a4f54 100%); align-items: center; }
    .start { width: 40px; display: flex; justify-content: center; }
    .find { width: 296px; height: 34px; background: #f2f0f1; display: flex; align-items: center; box-sizing: border-box; padding-left: 11px; gap: 10px; color: #444; font-size: 12.500px; }
    .app { width: 37.770px; height: 34px; display: flex; align-items: center; justify-content: center; position: relative; flex: none; }
    .app.u::after { content: ""; position: absolute; left: 4px; right: 4px; bottom: 0; height: 2px; background: #76b9ed; }
    .app.cur { background: #56636d; width: 36px; } .app.cur::after { left: 0; right: 0; }
    .tray { display: flex; align-items: center; color: #eee; }
    .clock { display: flex; flex-direction: column; align-items: center; line-height: 16px; }
  `;
  private timeline() {
    const ticks = ["mié 3/08", "jue 4/08", "vie 5/08", "sáb 6/08", "dom 7/08", "lun 8/08", "mar 9/08", "mié 10/08", "jue 11/08", "vie 12/08", "sáb 13/08", "dom 14/08", "lun 15/08", "mar 16/08", "mié 17/08", "jue 18/08", "vie 19/08"];
    return html`<svg width="1299" height="72" viewBox="40 301 1299 72" font-family="Open Sans, Noto Sans, sans-serif" font-size="7.500" fill="#444">
      <path d="M133 343.500H530M133 370.500H530" stroke="#555" stroke-width="1.300"/><path d="M530 343.500H1249V370.500H530" stroke="#999" fill="none" stroke-width="1.300"/>
      <rect x="117.500" y="313" width="30" height="13" fill="#2a6b2b"/><text x="132.500" y="322.500" fill="#fff" font-weight="700" text-anchor="middle" font-size="8">Hoy</text>
      <path d="M133 326V370.500" stroke="#3f8a44" stroke-width="1.300"/><path d="M530.800 301V374" stroke="#2f7a36" stroke-width="2"/>
      <text x="97" y="349.500" textLength="31" lengthAdjust="spacingAndGlyphs">Comienzo</text><text x="92" y="362.500" textLength="36" lengthAdjust="spacingAndGlyphs">mar 2/08/22</text>
      <text x="532" y="309.500" textLength="33" lengthAdjust="spacingAndGlyphs">lun 8/08/22</text>
      ${ticks.map((t, i) => { const x = 176.2 + i * 65.35, c = i < 6 ? "#555" : "#999"; return svg`<path d="M${x} 336V343" stroke=${c}/><text x=${x + 2} y="337.500" fill=${c} textLength=${i > 6 ? 29 : 26} lengthAdjust="spacingAndGlyphs">${t}</text>`; })}
      <text x="569.500" y="361.500" font-size="12.500" fill="#a5a5a5" textLength="242" lengthAdjust="spacingAndGlyphs">Agregar tareas con fechas a la línea de tiempo</text>
      <text x="1253" y="349.500" fill="#999">Fin</text><text x="1253" y="362.500" fill="#999" textLength="37" lengthAdjust="spacingAndGlyphs">vie 19/08/22</text>
    </svg>`;
  }
  private gantt() {
    const day = ["D", "L", "M", "X", "J", "V", "S", "D"];
    const br = (x1: number, x2: number, y: number) => svg`<path d="M${x1} ${y + 8.500}V${y}H${x2}${x2 < 1325 ? `V${y + 8.5}` : ""}" stroke="#555b60" stroke-width="1.700" fill="none"/>`;
    return html`<svg width="143" height="482" viewBox="1182 378 143 482" font-family="Liberation Sans, Arial, sans-serif" font-size="12" fill="#666">
      <rect x="1182" y="424" width="17.500" height="436" fill="#f3f3f4"/><rect x="1285.500" y="424" width="34.500" height="436" fill="#f3f3f4"/>
      <path d="M1182 424.500H1325" stroke="#999"/><path d="M1182 440.500H1325M1182 457.500H1325" stroke="#bcbcbc"/>
      <text x="1186.500" y="401.500" textLength="43.500" lengthAdjust="spacingAndGlyphs">31 jul '22</text><text x="1307" y="401.500">7 ag</text><path d="M1302.500 393V424" stroke="#ddd"/>
      ${day.map((d, i) => svg`<text x=${1191 + i * 17.15} y="417" text-anchor="middle" font-size="11">${d}</text><path d="M${1199.4 + i * 17.15} 411V424" stroke="#ddd"/>`)}
      <path d="M1216.500 424V860" stroke="#8bb08d"/>
      ${br(1216.5, 1325, 429)}<path d="M1216.500 444.500L1220.500 449L1216.500 453.500L1212.500 449Z" fill="#555"/><text x="1225.500" y="452.500" font-weight="700" fill="#222" font-size="11.500" textLength="22" lengthAdjust="spacingAndGlyphs">2/08</text>
      ${br(1222.5, 1325, 462)}<rect x="1221.800" y="478.500" width="3" height="9" fill="#555b60"/>
      ${br(1224, 1251, 496.5)}${br(1250.7, 1276, 513.5)}${br(1275.5, 1286, 530.5)}${br(1222.7, 1251, 547.7)}${br(1257, 1325, 565)}${br(1222.7, 1234.3, 634)}
    </svg>`;
  }
  render() {
    const mode = icon(15, 11, "0 0 15 11", svg`<rect x="0" y="0" width="11" height="6.500" fill="#3f78b6"/><path d="M5.500 7.500H12M10 5L12.800 7.500L10 10.200" stroke="#8b8f94" stroke-width="1.700"/>`);
    const down = (c = "#666") => icon(6, 5, "0 0 6 5", svg`<path d="M0 0H6L3 4.500Z" fill=${c}/>`);
    const restore = icon(9, 9, "0 0 9 9", svg`<path d="M0.500 3.500H6V8H0.500ZM2.500 3.500V0.700H8.500V5.500H6" stroke="#666" stroke-width="1.100"/>`);
    const close = icon(8, 8, "0 0 8 8", svg`<path d="M0.700 0.700L7.300 7.300M7.300 0.700L0.700 7.300" stroke="#555" stroke-width="1.600"/>`);
    const hd = (t: string, w: number) => html`<div>${fit(t, w)}${down()}</div>`;
    return html`
      <div class="title">
        <div class="qa">
          ${icon(15, 13, "0 0 15 13", svg`<path d="M0 1L9 0V13L0 12Z" fill="#236f3a"/><path d="M9 1.500H14.500V11.500H9" stroke="#236f3a"/><path d="M10 4H13M11 7H14M10 9H12" stroke="#236f3a"/><text x="1.500" y="10" font-size="9" font-weight="700" fill="#fff" font-family="Open Sans, sans-serif">P</text>`)}
          <span style="margin-left:9.500px">${icon(12, 12, "0 0 12 12", svg`<path d="M0.700 0.700H11.300V11.300H0.700Z" stroke="#8659ae" stroke-width="1.400"/><path d="M3 1H9V4.500H3Z" fill="#8659ae" opacity=".35"/><path d="M2.500 7H9.500V11.500H2.500Z" fill="#8659ae"/>`)}</span>
          <span style="margin-left:10px">${icon(13, 11, "0 0 13 11", svg`<path d="M5 0.500L1.500 4L5 7.500M1.500 4H8Q12 4 12 7Q12 10 8 10.500" stroke="#999" stroke-width="1.700"/>`)}</span><span style="margin-left:3px">${caretSvg("#bbb")}</span>
          <span style="margin-left:10px">${icon(13, 11, "0 0 13 11", svg`<path d="M8 0.500L11.500 4L8 7.500M11.500 4H5Q1 4 1 7Q1 10 5 10.500" stroke="#aaa" stroke-width="1.700"/>`)}</span><span style="margin-left:3px">${caretSvg("#bbb")}</span>
          <span style="margin-left:10px">${caretSvg()}</span>
        </div>
        <div class="ctx">${fit("HERRAMIENTAS DE DIAGRAMA DE GANTT", 170)}</div>
        <div class="name">${fit("VFC_SIPAC_FIX_OBSERVACIONES_v2.mpp - Microsoft Project", 274)}</div>
        <div class="ctl"><span>?</span><span>${icon(8, 8, "0 0 8 8", svg`<path d="M0 6H8" stroke="#666" stroke-width="1.600"/>`)}</span><span>${restore}</span><span>${close}</span></div>
      </div>
      <div class="tabs">
        <div class="t file">${fit("ARCHIVO", 43)}</div><div class="t task">${fit("TAREA", 30)}</div>
        <div style="margin-left:11px">${fit("RECURSO", 44.5)}</div><div style="margin-left:20px">${fit("CREAR UN INFORME", 94)}</div>
        <div style="margin-left:20px">${fit("PROYECTO", 49.5)}</div><div style="margin-left:19.500px">${fit("VISTA", 26.5)}</div>
        <div class="t fmt" style="margin-left:12.500px">${fit("FORMATO", 46)}</div>
        <div style="margin-left:auto">${fit("Iniciar sesión", 58)}</div>
        <div class="ctl" style="margin-left:0"><span>${restore}</span><span>${close}</span></div>
      </div>
      <div class="ribbon">
        <div class="grp" style="width:54.500px"><div class="body"><div class="big" style="width:53px">
          <div class="bi">${icon(26, 24, "0 0 26 24", svg`<rect x="0.600" y="0.600" width="24.800" height="22.800" fill="#fff" stroke="#888"/><rect x="0.600" y="0.600" width="24.800" height="4.500" fill="${BLUE}"/><path d="M6.500 5V23M1 10H25M1 15H25M1 19H25" stroke="#c8ccd0"/><rect x="9" y="7.500" width="9" height="3" fill="${BLUE}"/><rect x="8" y="12" width="7" height="3" fill="${BLUE}"/><rect x="14" y="16.500" width="9" height="3" fill="${BLUE}"/>`)}</div>
          <div class="ln">${fit("Diagrama", 45)}</div><div class="ln">${fit("de Gantt", 40)}${caretSvg()}</div></div></div><div class="lab">${fit("Ver", 13)}</div></div>
        <div class="grp" style="width:133px"><div class="body">
          <div class="big" style="width:39px;margin-left:0"><div class="bi">${icon(25, 27, "0 0 25 27", svg`<rect x="0.500" y="3" width="19" height="21" fill="#ebbd6d"/><rect x="5" y="1" width="10" height="5" fill="#777"/><rect x="8" y="0" width="4" height="3" fill="#777"/><path d="M13.500 12.500H20L23.500 16V26H13.500Z" fill="#fff" stroke="#888"/>`)}</div><div class="ln">${fit("Pegar", 25)}</div><div class="ln">${caretSvg()}</div></div>
          <div class="col tight">${small("cut", "Cortar", 28)}${small("copy", "Copiar", 30, 6)}${small("brush", "Copiar formato", 70.5)}</div></div><div class="lab">${fit("Portapapeles", 53)}</div></div>
        <div class="grp" style="width:120px"><div class="body" style="display:block;height:52px;padding-top:10px">
          <div class="fbox"><div class="fb1">${fit("Arial", 21)}${caretSvg()}</div><div class="fb2">${fit("11", 11)}${caretSvg()}</div></div>
          <div class="brow"><span style="width:18.500px">N</span><span style="width:18.500px;font-style:italic">K</span><span style="width:15px;text-decoration:underline">S</span><span style="width:1px;height:18px;background:#ddd;margin-right:5px"></span>
            ${icon(14, 17, "0 0 14 17", svg`<path d="M6 2L12 7L6 11.500L2 7Z" fill="#fff" stroke="#667" /><path d="M12 6Q14 9 12.500 11" stroke="#3a74b0" stroke-width="1.500"/><rect y="13.500" width="13" height="3.500" fill="#ffe900"/>`)}<span style="margin:0 5px 0 3px">${caretSvg()}</span>
            ${icon(14, 17, "0 0 14 17", svg`<text x="7" y="12" font-size="14" text-anchor="middle" fill="#444" font-weight="600" font-family="Open Sans, sans-serif">A</text><rect y="13.500" width="13" height="3.500" fill="#f03020"/>`)}<span style="margin:0 0 0 4px">${caretSvg()}</span></div>
        </div><div class="lab">${fit("Fuente", 26)}<span class="corner">${icon(6, 6, "0 0 6 6", svg`<path d="M0.500 5V0.500H5M2 2L5.500 5.500M5.500 2.500V5.500H2.500" stroke="#777" stroke-width=".900"/>`)}</span></div></div>
        <div class="grp" style="width:283px"><div class="body">
          <div style="width:102px;padding-left:5px">
            <div style="display:flex;padding-top:13px;gap:5px;height:14px">${["0%", "25%", "50%", "75%", "100%"].map((t, i) => icon(13, 14, "0 0 13 14", svg`${bar(0, 0, 13, 7)}<path d="M0 3.500H${i * 3.25}" stroke="#000" stroke-width="2"/><text x="6.500" y="12.800" font-size="5.500" fill="#444" text-anchor="middle" font-family="Open Sans, sans-serif" font-weight="600">${t}</text>`))}</div>
            <div style="display:flex;align-items:center;height:16px;margin-top:10px">
              ${icon(13, 14, "0 0 13 14", svg`<path d="M0 1H9M3 4H9M0 1V2" stroke="#777" stroke-width="1.400"/><path d="M4 10H13M8 6.500L4 10L8 13.500" stroke="#3f8f79" stroke-width="2"/>`)}
              <span style="margin-left:4px">${icon(13, 14, "0 0 13 14", svg`<path d="M3 1H13M6 4H13" stroke="#777" stroke-width="1.400"/><path d="M0 10H9M6 6.500L10 10L6 13.500" stroke="#3f8f79" stroke-width="2"/>`)}</span>
              <span style="margin:0 6px;width:1px;height:15px;background:#ddd"></span>
              ${icon(12, 14, "0 0 12 14", svg`<rect y="5" width="5" height="4" fill="${BLUE}"/><rect x="7" y="5" width="5" height="4" fill="${BLUE}"/><path d="M6 0V3M6 11V14M3 1L4.500 3M9 1L7.500 3M3 13L4.500 11M9 13L7.500 11" stroke="#5a8fc5"/>`)}
              <span style="margin:0 3px 0 6px;width:1px;height:15px;background:#ddd"></span>
              ${icon(13, 8, "0 0 13 8", svg`<rect x="0.700" y="1" width="7" height="5.500" rx="2.700" stroke="#666" stroke-width="1.500"/><rect x="5.200" y="1" width="7" height="5.500" rx="2.700" stroke="#666" stroke-width="1.500"/>`)}
              <span style="margin-left:5px">${icon(13, 14, "0 0 13 14", svg`<path d="M5 4H3.500Q0.800 4 0.800 7T3.500 10H5M8 4H9.500Q12.200 4 12.200 7T9.500 10H8" stroke="#666" stroke-width="1.500"/><path d="M6.500 0V3M6.500 11V14M3.500 1L4.500 3M9.500 1L8.500 3M3.500 13L4.500 11M9.500 13L8.500 11" stroke="#efa54e"/>`)}</span>
            </div></div>
          <div class="col">${small("upd", "Actualizar según programación", 142, 7)}${small("resp", "Respetar vínculos", 79)}${small("deact", "Desactivar", 47.5)}</div>
        </div><div class="lab">${fit("Programación", 57)}</div></div>
        <div class="grp" style="width:242px"><div class="body">
          <div class="big" style="width:71px"><div class="bi">${icon(22, 25, "0 0 22 25", svg`<path d="M14 0L22 7L18 9L15.500 16L11 12.500L5 17L8 10L5 6.500L12 4.500Z" fill="#39b8cf"/><path d="M9 14L1 24" stroke="#8a9095" stroke-width="1.600"/>`)}</div><div class="ln">${fit("Programar", 49)}</div><div class="ln">${fit("manualmente", 62)}</div></div>
          <div class="big auto" style="width:75px"><div class="bi">${icon(26, 18, "0 0 26 18", svg`<rect width="20" height="10" fill="${BLUE}"/><path d="M10 12H22M17.500 6.500L23 12L17.500 17.500" stroke="#777" stroke-width="3"/>`)}</div><div class="ln">${fit("Autoprogramar", 70.5)}</div></div>
          <div class="col" style="margin-left:8px">${small("insp", "Inspeccionar", 57.5, 6)}${small("mover", "Mover", 29.5, 3)}${small("modo", "Modo", 28.5, 3)}</div>
        </div><div class="lab">${fit("Tareas", 26)}</div></div>
        <div class="grp" style="width:105px"><div class="body">
          <div class="big" style="width:39px;margin-left:.5px"><div class="bi" style="align-items:flex-start;padding-top:4px;height:29px">${icon(26, 19, "0 0 26 19", svg`<rect x="5" y="8" width="20" height="11" fill="${BLUE}"/><path d="M6 0V13M0 6H12" stroke="#4f9f8b" stroke-width="4"/>`)}</div><div class="ln">${fit("Tarea", 24)}</div><div class="ln">${caretSvg()}</div></div>
          <div class="col">${small("resumen", "Resumen", 41)}${small("hito", "Hito", 20)}${small("entrega", "Entrega", 35, 3, "dis")}</div>
        </div><div class="lab">${fit("Insertar", 30)}</div></div>
        <div class="grp" style="width:214.500px"><div class="body">
          <div class="big" style="width:64.500px"><div class="bi">${icon(26, 23, "0 0 26 23", svg`<rect x="0.600" y="0.600" width="24.800" height="21.800" fill="#fff" stroke="#888"/><rect x="0.600" y="0.600" width="24.800" height="4.500" fill="${BLUE}"/><rect x="3" y="11.500" width="8" height="3.500" fill="${BLUE}"/><path d="M14 8H23M14 10.500H23M14 13H23M14 15.500H23M14 18H23" stroke="#bbb"/>`)}</div><div class="ln">${fit("Información", 55)}</div></div>
          <div class="col tight">${small("notas", "Notas de tareas", 72)}${small("detalles", "Detalles", 37)}${small("agregar", "Agregar a escala de tiempo", 126.5)}</div>
        </div><div class="lab">${fit("Propiedades", 51)}</div></div>
        <div class="grp" style="width:131px"><div class="body">
          <div class="big" style="width:64px"><div class="bi" style="padding-top:3px;height:30px">${icon(22, 21, "0 0 22 21", svg`<rect y="0" width="21" height="12" fill="${BLUE}"/><path d="M11 3L19 13H15L17.500 19L15 20L13 14.500L11 17Z" fill="#fff" stroke="#666"/>`)}</div><div class="ln">${fit("Desplazarse", 55)}</div><div class="ln">${fit("a tarea", 31)}</div></div>
          <div class="col tight">${small("buscar", "Buscar", 29.5, 6)}${small("borrar", "Borrar", 29, 2)}${small("rellenar", "Rellenar", 38, 3)}</div>
        </div><div class="lab">${fit("Edición", 28)}</div></div>
        <div style="margin:67px 7px 0 auto">${icon(8, 6, "0 0 8 6", svg`<path d="M0.500 5L4 1L7.500 5" stroke="#555" stroke-width="1.600"/>`)}</div>
      </div>
      <div class="timeline"><div class="vt" style="font-size:11.300px;font-weight:600"><span>ESCALA DE TI</span></div>${this.timeline()}</div>
      <div class="gap"></div>
      <div class="main">
        <div class="vt"><span>DIAGRAMA DE GANTT</span></div>
        <div class="pane">
          <div class="r h"><div class="id"></div>
            <div><span>%<br>com</span>${down()}</div><div><span>Modo<br>de<br>tarea</span>${down()}</div>
            <div class="hn">${fit("Nombre de tarea", 90)}${down("#2b7034")}</div>
            ${hd("Duración", 46)}${hd("Comienzo", 50)}${hd("Fin", 16)}${hd("Predecesoras", 70)}${hd("Nombres de los recursos", 125.5)}<div style="padding:0 0 2px 0"><span style="margin-left:-6px">Ag</span></div></div>
          ${ROWS.map(([id, name, ind, st, dur, a, b, pre, mk, nw], i) => html`<div class="r ${st.endsWith("b") ? "bold" : "n"} ${i === 0 ? "one" : i === 1 ? "two" : ""}">
            <div class="id">${id}</div><div>0%</div><div class="md">${mode}</div>
            <div class="nm ${st.replace(/ ?b$/, "")}" style="padding-left:${(i === 1 ? ind - 2 : ind) - 0.8}px">
              ${mk ? html`<span class="mk">${mk === "o" ? icon(5, 5, "0 0 5 5", svg`<path d="M5 0V5H0Z" fill="#333"/>`) : icon(5, 7, "0 0 5 7", svg`<path d="M1 1V6L4 3.500Z" stroke="#e8eef5" fill="#c9d5e0" stroke-width=".800"/>`)}</span>` : nothing}${fit(name, nw!)}</div>
            <div>${dur}</div><div>${a}</div><div>${b}</div><div>${pre}</div><div></div><div></div></div>`)}
          ${BLANKS.map(() => html`<div class="r n" style="flex:0 1 auto"><div class="id" style="border-right-color:#dfe2e4"></div><div></div><div></div><div></div><div></div><div></div><div></div><div></div><div></div><div></div></div>`)}
          <div class="hs" style="margin-left:2px"><div class="arr">${icon(4, 6, "0 0 4 6", svg`<path d="M4 0V6L0 3Z" fill="#666"/>`)}</div><div style="width:810px"></div><div class="arr" style="margin-left:auto;margin-right:1px">${icon(4, 6, "0 0 4 6", svg`<path d="M0 0V6L4 3Z" fill="#666"/>`)}</div></div>
        </div>
        <div class="gantt">${this.gantt()}<div class="hs"><div class="arr">${icon(4, 6, "0 0 4 6", svg`<path d="M4 0V6L0 3Z" fill="#666"/>`)}</div><div style="width:45px"></div><div class="arr" style="margin-left:auto">${icon(4, 6, "0 0 4 6", svg`<path d="M0 0V6L4 3Z" fill="#666"/>`)}</div></div></div>
        <div class="vs"><div>${icon(6, 4, "0 0 6 4", svg`<path d="M0 4H6L3 0Z" fill="#666"/>`)}</div><div>${icon(6, 4, "0 0 6 4", svg`<path d="M0 0H6L3 4Z" fill="#666"/>`)}</div></div>
      </div>
      <div class="status">${fit("LISTO", 22.5)}<span style="margin:0 2.500px 0 23.500px">${icon(10, 11, "0 0 10 11", svg`<path d="M6 0L10 4L8 5L6.500 8.500L4.500 7L1 11L3.500 6L1.500 4L5 3Z" fill="#fff"/>`)}</span>${fit("NUEVAS TAREAS : PROGRAMADA MANUALMENTE", 202)}
        <div class="vw">
          <div class="cur">${icon(10, 10, "0 0 10 10", svg`<path d="M0.500 0.500H9.500V9.500H0.500ZM2 3H5V5H8M5 7H8" stroke="#fff"/>`)}</div>
          <div>${icon(10, 10, "0 0 10 10", svg`<path d="M0 1H10M0.500 3.500H9.500V9.500H0.500ZM3.500 3V10M6.500 3V10M0 6.500H10" stroke="#fff" stroke-width="1.200"/>`)}</div>
          <div>${icon(10, 10, "0 0 10 10", svg`<path d="M0 0H10V9H0ZM2 5H4V7H2ZM5 2H8V4H5Z" fill="#fff" fill-rule="evenodd"/>`)}</div>
          <div>${icon(10, 10, "0 0 10 10", svg`<path d="M0.500 0.500H9.500V9.500H0.500ZM3.500 0V10M6.500 0V10M0 3.500H10M0 6.500H10" stroke="#cfe0cf"/>`)}</div>
          <div>${icon(10, 10, "0 0 10 10", svg`<path d="M2.500 0.500H8.500V9.500H2.500ZM0 3H4M0 5H4M0 7H4" stroke="#cfe0cf"/>`)}</div>
        </div>
        <div class="slider">${icon(111, 12, "0 0 111 12", svg`<path d="M2 6H8M100 6H108M104 2V10" stroke="#fff" stroke-width="1.800"/><path d="M11 6H97M54 3.500V8.500" stroke="#d5e2d5"/><rect x="77" y="1" width="3.500" height="10" fill="#fff"/>`)}</div>
      </div>
      <div class="dock">
        <div class="start">${icon(15, 14, "0 0 22 21", winLogo("#fff"))}</div>
        <div class="find">${icon(14, 15, "0 0 22 22", searchGlyph("#333"))}${fit("Escribe aquí para buscar", 141.5)}</div>
        <div class="app" style="width:43px">${icon(16, 14, "0 0 32 32", taskView("#ddd"))}</div>
        ${([
          [svg`<circle cx="16" cy="16" r="16" fill="#ece8e4"/><path d="M10 5C20 2 25 8 24 17C24 24 21 29 15 30C9 28 9 20 10 14Z" fill="#5f4436"/><path d="M10 8C14 8 15 15 14 24L11 22Z" fill="#f4efe9"/>`, ""],
          [svg`<circle cx="14" cy="16" r="14" fill="#e08b2c"/><circle cx="18" cy="16" r="14.500" fill="#2d2659"/><path d="M4 12H32M3.500 16H32.500M4 20H32" stroke="#cfd0ea" stroke-width="2.200"/>`, ""],
          [svg`<circle cx="16" cy="16" r="15.500" fill="#dd4630"/><path d="M1 14C6 2 20 3 24 14C26 22 22 28 18 31C8 32 0 24 1 14Z" fill="#f0dcd2"/><path d="M9 16C10 8 20 8 22 16C23 24 19 29 15 31C11 27 8 22 9 16Z" fill="#2c7fd0"/><path d="M2 16C4 10 8 10 9 16L14 31C6 30 1 24 2 16Z" fill="#6fa6d6"/>`, ""],
          [svg`<path d="M3 2L16 0L30 6L32 24L22 32L3 29Z" fill="#1c74e8"/><path d="M3 2L15 0L18 14L4 28L0 14Z" fill="#f0306b"/><rect x="6" y="6" width="20" height="20" fill="#000"/><text x="8.500" y="17" font-size="11" font-weight="700" fill="#fff" font-family="Liberation Mono, monospace">IJ</text><path d="M9 22.500H16" stroke="#fff" stroke-width="1.800"/>`, ""],
          [svg`<circle cx="16" cy="16" r="15.500" fill="#f0f3ec"/><path d="M.500 14A15.500 15.500 0 0 1 31.500 14Z" fill="#69b52f"/><path d="M3 24A15.500 15.500 0 0 0 29 24Z" fill="#a9aca8"/><text x="16" y="21.500" font-size="14" font-weight="700" text-anchor="middle" fill="#111" font-family="Open Sans, sans-serif">HS</text>`, ""],
          [svg`<path d="M10 14V9A6 6 0 0 1 22 9V14" stroke="#a8abae" stroke-width="3"/><rect x="7" y="13" width="18" height="13" fill="#55595d"/><path d="M0 0H10L7 4L12 9L9 12L4 7L0 10Z" fill="#2a7de0"/><path d="M31 31H20L23 27L18 22L21 19L27 24L31 20Z" fill="#30b23a"/>`, ""],
          [svg`<ellipse cx="13" cy="9" rx="14" ry="8.500" transform="rotate(-12 13 9)" fill="#f2f2f2"/><path d="M1 11C4 18 16 16 26 7" stroke="#d65a52" stroke-width="2"/><path d="M5 21L24 12M20 10L22 24" stroke="#ddd" stroke-width="3"/><circle cx="19" cy="26" r="3.500" stroke="#2b86d2" stroke-width="2.600"/><circle cx="28" cy="20" r="3.500" stroke="#2b86d2" stroke-width="2.600"/>`, "u"],
          [svg`${edge}<circle cx="8" cy="24" r="8" fill="#c9ccd0"/><circle cx="8" cy="22" r="2.500" fill="#555"/><path d="M3.500 29Q8 22.500 12.500 29Z" fill="#555"/>`, "u"],
          [notepadpp, "u"],
          [svg`<path d="M30 2C33 18 27 31 14 31C3 30 -1 18 5 10C13 3 24 9 30 2Z" fill="#4ea63d"/><path d="M4 26C14 26 24 21 28 10" stroke="#2a6f24" stroke-width="2.500"/><path d="M6 15C14 14 22 14 28 8" stroke="#8fd06c" stroke-width="2.500"/>`, ""],
          [svg`<path d="M24 0L32 4V28L24 32L9 18L3 23L0 21L6 16L0 11L3 9L9 14ZM24 9L14 16L24 23Z" fill="#1f8ad2" fill-rule="evenodd"/><path d="M24 0L32 4V28L24 32Z" fill="#37a5ee"/>`, ""],
          [svg`<rect x="1" y="1" width="30" height="24" fill="#333" stroke="#c8c8c8" stroke-width="2"/><path d="M4 6L8 9L4 12" stroke="#fff" stroke-width="1.500"/><path d="M17 10L24 18L17 25L10 17Z" fill="#e9483a"/><path d="M24 18L30 24L22 32L15 25Z" fill="#5bb53a"/><path d="M27 10L33 16L24 24L20 18Z" fill="#3a7de0"/><path d="M22 26L27 28L22 32Z" fill="#f5c02f"/>`, ""],
          [svg`<path d="M2 2H30V18L18 30H2Z" fill="#ffc918"/><path d="M30 18H18V30Z" fill="#3b3a3a"/>`, "u"],
          [folder, "u"],
          [svg`<rect x="0" y="2" width="32" height="28" fill="#000" stroke="#999" stroke-width="1.500"/><rect x="0" y="2" width="32" height="4" fill="#c8c8c8"/><text x="3" y="16" font-size="7.500" fill="#fff" font-family="Liberation Mono, monospace">C:\\_</text>`, "u"],
          [javaEE, "u"], [forti, "u"], [excel, "u"],
        ] as [unknown, string][]).map(([b, c]) => html`<div class="app ${c}">${icon(20, 20, "0 0 32 32", b)}</div>`)}
        <div class="app u cur">${icon(16, 16, "0 0 32 32", svg`<path d="M0 3L20 0V32L0 29Z" fill="#21733c"/><path d="M20 4H31V28H20" fill="#e8f3e9" stroke="#21733c" stroke-width="2"/><path d="M22 9H28M23 14H28M22 20H26" stroke="#21733c" stroke-width="2.500"/><text x="3" y="24" font-size="21" font-weight="700" fill="#fff" font-family="Open Sans, sans-serif">P</text>`)}</div>
        <div class="tray">
          <span style="margin-left:7px">${icon(12, 8, "0 0 16 11", chevUp("#eee"))}</span><span style="margin-left:7px">${icon(15, 14, "0 0 22 19", speaker("#ddd"))}</span>
          <span style="margin-left:8px">${icon(12, 12, "0 0 18 18", wifi("#ddd"))}</span><span style="margin-left:7px">${icon(15, 12, "0 0 24 16", battery("#eee"))}</span>
          <span style="margin-left:9px">${fit("ESP", 17)}</span>
          <span class="clock" style="margin-left:15px">${fit("18:21", 23)}${fit("2/08/2022", 47)}</span>
          <span style="margin-left:18px">${icon(15, 14, "0 0 20 20", note("#eee", "#333"))}</span>
        </div>
      </div>`;
  }
}

/* ---------- participants ---------- */

@customElement("participant-tile")
class ParticipantTile extends LitElement {
  @property() letter = "";
  @property() color = "";
  @property() name = "";
  @property({ type: Number }) nameWidth = 0;
  @property({ type: Boolean, reflect: true }) active = false;
  static styles = css`
    :host { display: flex; align-items: center; justify-content: center; background: #3c4043; border-radius: 9px; box-sizing: border-box; position: relative; }
    :host([active]) { box-shadow: inset 0 0 0 5px #669df6; }
    .av { width: 80px; height: 80px; border-radius: 50%; color: #fff; display: flex; align-items: center; justify-content: center; font: 400 42px/80px "Roboto", "Open Sans", sans-serif; }
    .nm { position: absolute; left: 19.500px; bottom: 15px; color: #fff; font: 700 17px/24px "Lato", "Open Sans", sans-serif; text-shadow: 0 1px 2px rgba(0, 0, 0, .6); }
    .badge { position: absolute; right: 10px; top: 10px; width: 32px; height: 32px; border-radius: 50%; background: #303336; display: flex; align-items: center; justify-content: center; }
    .badge.more { background: #1a6fdc; width: 33px; height: 33px; }
  `;
  render() {
    return html`<div class="av" style="background:${this.color}">${this.letter}</div>
      <div class="nm">${fit(this.name, this.nameWidth)}</div>
      <div class="badge ${this.active ? "more" : ""}">${this.active
        ? icon(20, 6, "0 0 20 6", svg`<circle cx="2.500" cy="3" r="2.500" fill="#fff"/><circle cx="10" cy="3" r="2.500" fill="#fff"/><circle cx="17.500" cy="3" r="2.500" fill="#fff"/>`)
        : mat(22, P.micOff)}</div>`;
  }
}

/* ---------- Windows taskbar ---------- */

@customElement("windows-taskbar")
class WindowsTaskbar extends LitElement {
  static styles = css`
    :host { display: flex; height: 50px; background: #eeeeee; align-items: center; font: 15px/20px "Open Sans", "Noto Sans", sans-serif; color: #111; }
    .start { width: 60.500px; height: 50px; background: linear-gradient(90deg, #d8d8d8, #e4e4e4); display: flex; align-items: center; padding-left: 20px; box-sizing: border-box; }
    .find { width: 429px; height: 49px; background: #fff; border: 1px solid #c9c9c9; box-sizing: border-box; display: flex; align-items: center; padding-left: 13.500px; gap: 14px; font-size: 17.500px; color: #222; }
    .slot { display: flex; align-items: center; justify-content: center; height: 50px; width: 47.070px; position: relative; flex: none; }
    .slot.u::after { content: ""; position: absolute; bottom: 0; left: 5.500px; right: 5.500px; height: 3px; background: #0078d7; }
    .slot.two::after { background: linear-gradient(90deg, #0078d7 73%, #5fa8e6 73%); }
    .slot.hi { background: #f9f9f9; }
    .slot.hi::after { left: 0; right: 0; }
    .tray { margin-left: auto; display: flex; align-items: center; height: 50px; }
    .clock { display: flex; flex-direction: column; align-items: center; line-height: 23px; width: 76px; }
    .n { position: relative; }
    .n b { position: absolute; left: 9px; top: 8px; width: 20px; height: 20px; border-radius: 50%; background: #d7d7d7; border: 1px solid #999; font: 14px/20px "Open Sans", sans-serif; text-align: center; }
    .edge { width: 1px; height: 50px; background: #bbb; margin: 0 5px 0 13px; }
  `;
  render() {
    const apps: [unknown, string][] = [
      [folder, "u two"], [chrome, ""], [excel, "u"], [notepad, "u two"], [chromeWith("#ef6c00"), "u hi"], [vstudio, "u"], [chromeWith("#004d40"), "u hi"],
      [winscp, "u"], [notepadpp, "u"], [dbTool, "u"], [xampp, "u"], [lockApp, "u"], [word, "u"], [dbeaver, "u"], [forti, "u"], [edge, "u"], [javaEE, "u"]];
    return html`
      <div class="start">${icon(20, 20, "0 0 22 21", winLogo("#000"))}</div>
      <div class="find">${icon(21, 21, "0 0 22 22", searchGlyph("#111"))}${fit("Escribe aquí para buscar", 205)}</div>
      <div class="slot" style="width:60px">${icon(20, 20, "0 0 20 20", svg`<circle cx="10" cy="10" r="8.300" stroke="#000" stroke-width="2.300"/>`)}</div>
      <div class="slot" style="width:60px;margin-right:4px">${icon(24, 20, "0 0 32 32", taskView("#111"))}</div>
      ${apps.map(([b, c]) => html`<div class="slot ${c}">${icon(29, 29, "0 0 32 32", b)}</div>`)}
      <div class="tray">
        ${icon(22, 24, "0 0 22 24", svg`<defs><linearGradient id="s" x1="0" y1="0" x2="1" y2="1"><stop offset="0" stop-color="#ffc400"/><stop offset="1" stop-color="#ea6a0a"/></linearGradient></defs><circle cx="11" cy="12" r="11" fill="url(#s)"/>`)}
        <span style="margin:3px 0 0 15px;font-size:16.500px">${fit("17°C", 36.5)}</span>
        <span style="margin-left:22px">${icon(16, 11, "0 0 16 11", chevUp("#111"))}</span>
        <span style="margin-left:11px">${icon(22, 16, "0 0 24 17", battery("#000"))}</span>
        <span style="margin-left:12px">${icon(16, 20, "0 0 16 20", svg`<rect x="1" y="5.500" width="9" height="9" rx="1" stroke="#000" stroke-width="1.400"/><path d="M12 9L15 6.500V13.500L12 11" stroke="#000" stroke-width="1.200"/><path d="M2 3Q6 0 10 3M2 17Q6 20 10 17" stroke="#000" stroke-width="1.200"/>`)}</span>
        <span style="margin-left:14px">${icon(17, 17, "0 0 18 18", wifi("#111"))}</span>
        <span style="margin-left:10px">${icon(22, 19, "0 0 22 19", speaker("#111"))}</span>
        <span style="margin-left:12px">${icon(14, 22, "0 0 14 22", svg`<rect x="2.500" y="0" width="9" height="15" rx="1" fill="#000"/><path d="M1 11V14.500Q1 17.500 4 17.500H10Q13 17.500 13 14.500V11M7 18V21M4 21H10" stroke="#000" stroke-width="1.300"/>`)}</span>
        <span style="margin-left:19px">${fit("ESP", 23)}</span>
        <span class="clock" style="margin-left:19px">${fit("18:21", 33.5)}${fit("02/08/2022", 75.5)}</span>
        <span class="n" style="margin-left:23px">${icon(20, 20, "0 0 20 20", note("#000", "#fff"))}<b>3</b></span>
        <span class="edge" style="margin-left:25px"></span>
      </div>`;
  }
}

/* ---------- page ---------- */

@customElement("app-root")
class AppRoot extends LitElement {
  static styles = css`
    :host { display: flex; flex-direction: column; width: 1920px; height: 1080px; background: #202124; overflow: hidden; font-family: "Lato", "Open Sans", sans-serif; color: #fff; position: relative; }
    .present { margin: 20px 20px 0; height: 50px; border-radius: 9px; background: #3c4043; display: flex; align-items: center; padding: 0 0 1px 20px; box-sizing: border-box; font-weight: 700; font-size: 17px; gap: 19.500px; flex: none; }
    .pav { width: 30px; height: 30px; border-radius: 50%; background: #00897b; display: flex; align-items: center; justify-content: center; font: 400 16px "Roboto", sans-serif; }
    .toast { position: absolute; left: 823px; top: 104px; width: 275px; height: 45px; border-radius: 23px; background: rgba(0, 0, 0, .72); display: flex; align-items: center; padding-left: 20px; box-sizing: border-box; gap: 12px; font-weight: 700; font-size: 17px; line-height: 22px; }
    .toast .tx { margin-top: -2px; }
    .stage { display: flex; padding: 25px 20px 0; height: 743px; flex: none; }
    .tiles { margin: 145px 0 0 20px; display: grid; grid-template-columns: 264px 262px; grid-template-rows: 219px 220px; gap: 15px; height: 454px; }
    .controls { height: 103px; display: flex; align-items: center; flex: none; padding: 4px 21px 0 30px; box-sizing: border-box; }
    .code { display: flex; align-items: center; font-weight: 700; font-size: 19px; width: 761px; margin-top: -1px; }
    .code i { width: 1px; height: 20px; background: #c8cacc; margin: 0 15px; }
    .btns { display: flex; gap: 15px; }
    .btn { width: 50px; height: 50px; border-radius: 25px; display: flex; align-items: center; justify-content: center; background: #3c4043; }
    .red { background: #ea4335; }
    .call { width: 70px; }
    .side { margin-left: auto; display: flex; height: 36px; }
    .side div { width: 60.200px; display: flex; align-items: center; justify-content: center; position: relative; }
    .side b { position: absolute; left: 31px; top: -18.500px; width: 25px; height: 25px; border-radius: 50%; background: #5f6368; font-size: 14px; line-height: 25px; text-align: center; }
  `;
  render() {
    return html`
      <browser-chrome></browser-chrome>
      <div class="present"><div class="pav">P</div>${fit("Pedro Bermudez está presentando", 291)}</div>
      <div class="stage">
        <project-window></project-window>
        <div class="tiles">
          <participant-tile active letter="P" color="#00897b" name="Pedro Bermudez" .nameWidth=${138}></participant-tile>
          <participant-tile letter="E" color="#33691e" name="Eduardo Alonso López B..." .nameWidth=${214}></participant-tile>
          <participant-tile letter="K" color="#8d6e63" name="Kenneth Jared Motta Esp..." .nameWidth=${222}></participant-tile>
          <participant-tile letter="F" color="#004d40" name="Tú" .nameWidth=${19}></participant-tile>
        </div>
      </div>
      <div class="controls">
        <div class="code">${fit("18:21", 44)}<i></i>${fit("jwv-nosk-uev", 130)}</div>
        <div class="btns">
          <div class="btn red">${mat(25, P.micOff)}</div>
          <div class="btn red">${mat(25, P.camOff)}</div>
          <div class="btn">${icon(29, 23, "0 0 29 23", svg`<rect x="1.300" y="1.300" width="26.400" height="20.400" rx="1.500" stroke="#fff" stroke-width="2.600"/><path d="M14.500 5.500L20 11.500H16V17H13V11.500H9Z" fill="#fff"/>`)}</div>
          <div class="btn">${icon(6, 21, "0 0 6 21", svg`<circle cx="3" cy="3" r="2.600" fill="#fff"/><circle cx="3" cy="10.500" r="2.600" fill="#fff"/><circle cx="3" cy="18" r="2.600" fill="#fff"/>`)}</div>
          <div class="btn red call">${mat(31, P.callEnd)}</div>
        </div>
        <div class="side">
          <div>${mat(31, P.info)}</div>
          <div>${mat(35, P.people)}<b>5</b></div>
          <div>${mat(31, P.chat)}</div>
          <div>${icon(27, 27, "0 0 27 27", svg`<path d="M13.500 3.500L18.500 11.500H8.500Z" stroke="#fff" stroke-width="2.600"/><rect x="2.500" y="16.500" width="8" height="8" stroke="#fff" stroke-width="2.600"/><circle cx="20" cy="20.500" r="4.600" stroke="#fff" stroke-width="2.600"/>`)}</div>
        </div>
      </div>
      <windows-taskbar></windows-taskbar>
      <div class="toast">${mat(28, P.micOffLine)}<span class="tx">${fit("Micrófono desactivado", 195)}</span></div>`;
  }
}
